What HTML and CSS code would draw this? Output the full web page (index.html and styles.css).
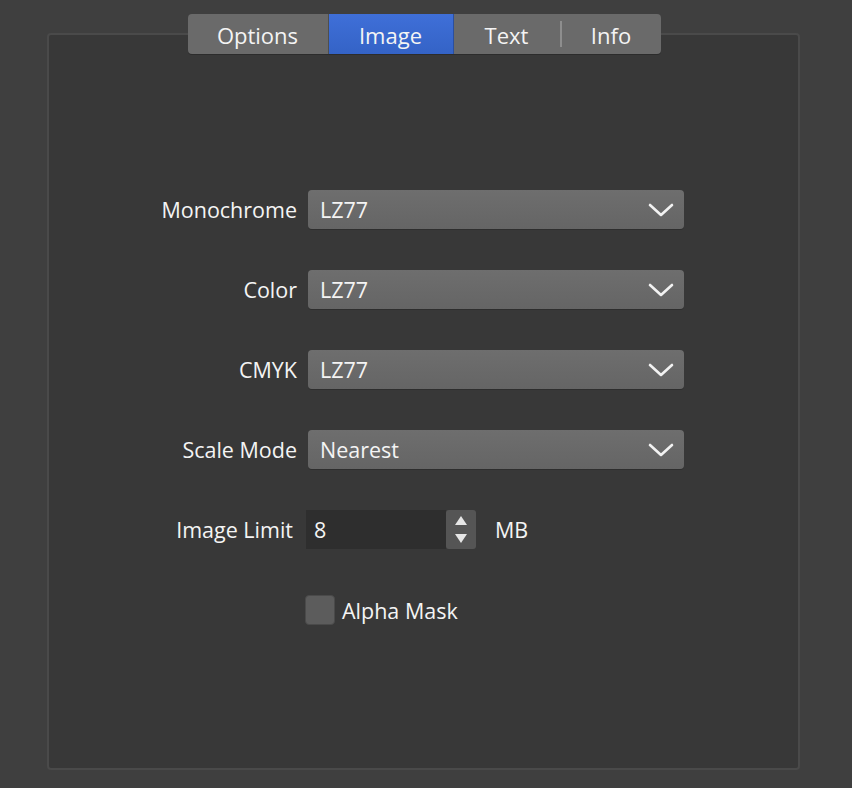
FILE: index.html
```html
<!DOCTYPE html>
<html>
<head>
<meta charset="utf-8">
<link rel="stylesheet" href="styles.css">
</head>
<body>
<div class="page">
  <div class="panel">
    <div class="tabs">
      <div class="tab t-options">Options</div>
      <div class="tab t-image active">Image</div>
      <div class="tab t-text">Text</div>
      <div class="sep"></div>
      <div class="tab t-info">Info</div>
    </div>
    <div class="form">
      <div class="label">Monochrome</div>
      <div class="select"><span>LZ77</span><svg class="chev" width="26" height="14" viewBox="0 0 26 14"><path d="M2 2 L13 12 L24 2" fill="none" stroke="#f2f2f2" stroke-width="2.6" stroke-linecap="round" stroke-linejoin="round"/></svg></div>

      <div class="label">Color</div>
      <div class="select"><span>LZ77</span><svg class="chev" width="26" height="14" viewBox="0 0 26 14"><path d="M2 2 L13 12 L24 2" fill="none" stroke="#f2f2f2" stroke-width="2.6" stroke-linecap="round" stroke-linejoin="round"/></svg></div>

      <div class="label">CMYK</div>
      <div class="select"><span>LZ77</span><svg class="chev" width="26" height="14" viewBox="0 0 26 14"><path d="M2 2 L13 12 L24 2" fill="none" stroke="#f2f2f2" stroke-width="2.6" stroke-linecap="round" stroke-linejoin="round"/></svg></div>

      <div class="label">Scale Mode</div>
      <div class="select"><span>Nearest</span><svg class="chev" width="26" height="14" viewBox="0 0 26 14"><path d="M2 2 L13 12 L24 2" fill="none" stroke="#f2f2f2" stroke-width="2.6" stroke-linecap="round" stroke-linejoin="round"/></svg></div>

      <div class="label label-limit">Image Limit</div>
      <div class="limit">
        <div class="num">8</div>
        <div class="stepper">
          <svg width="12" height="9" viewBox="0 0 12 9"><path d="M6 0 L12 9 L0 9 Z" fill="#e6e6e6"/></svg>
          <svg width="12" height="9" viewBox="0 0 12 9"><path d="M0 0 L12 0 L6 9 Z" fill="#e6e6e6"/></svg>
        </div>
        <div class="unit">MB</div>
      </div>

      <div class="label"></div>
      <div class="check-row">
        <div class="checkbox"></div>
        <div class="check-label">Alpha Mask</div>
      </div>
    </div>
  </div>
</div>
</body>
</html>
```

FILE: styles.css
```css
html, body {
  margin: 0;
  padding: 0;
  background: #3f3f3f;
}
body {
  width: 852px;
  height: 788px;
  overflow: hidden;
  font-family: "Open Sans", Lato, sans-serif;
  color: #f4f4f4;
}
.page {
  padding: 33px 51px 0 47px;
}
.panel {
  box-sizing: border-box;
  width: 753px;
  height: 737px;
  background: #383838;
  border: 2px solid #4a4a4a;
  border-radius: 4px;
  display: flex;
  flex-direction: column;
  align-items: center;
}
.tabs {
  margin-top: -21px;
  height: 40px;
  display: flex;
  align-items: center;
  background: #6a6a6a;
  border-radius: 4px;
  box-shadow: 0 1px 0 #2c2c2c;
  font-size: 22px;
  margin-left: 1px;
}
.tab {
  height: 40px;
  display: flex;
  align-items: center;
  justify-content: center;
  box-sizing: border-box;
  padding-top: 2px;
}
.t-options { width: 141px; border-right: 1px solid #4e4e4e; }
.t-image {
  width: 125px;
  background: linear-gradient(#3f6fd8, #3463c6);
  border-right: 1px solid #2b4f9e;
}
.t-text { width: 106px; }
.sep {
  width: 2px;
  height: 26px;
  background: #8e8e8e;
}
.t-info { width: 99px; }
.form {
  margin-top: 136px;
  align-self: flex-start;
  margin-left: 88px;
  display: grid;
  grid-template-columns: 160px 376px;
  column-gap: 11px;
  row-gap: 41px;
  align-items: center;
  font-size: 21.5px;
}
.label {
  text-align: right;
  white-space: nowrap;
}
.label-limit { padding-right: 4px; }
.select {
  height: 39px;
  box-sizing: border-box;
  background: linear-gradient(#6e6e6e, #656565);
  border-radius: 4px;
  box-shadow: 0 1px 0 #2e2e2e;
  display: flex;
  align-items: center;
  justify-content: space-between;
  padding: 0 10px 0 12px;
}
.chev { display: block; }
.limit {
  display: flex;
  align-items: center;
  height: 39px;
  margin-left: -2px;
}
.num {
  width: 140px;
  height: 39px;
  box-sizing: border-box;
  background: #2e2e2e;
  display: flex;
  align-items: center;
  padding-left: 8px;
}
.stepper {
  width: 30px;
  height: 39px;
  box-sizing: border-box;
  background: #555555;
  border-radius: 3px;
  display: flex;
  flex-direction: column;
  align-items: center;
  justify-content: space-between;
  padding: 6px 0 6px;
}
.stepper svg { display: block; }
.unit {
  margin-left: 19px;
}
.check-row {
  display: flex;
  align-items: center;
  height: 30px;
  margin-left: -3px;
  margin-top: 5px;
}
.checkbox {
  width: 30px;
  height: 30px;
  box-sizing: border-box;
  background: #5c5c5c;
  border: 1px solid #4a4a4a;
  border-radius: 4px;
}
.check-label {
  margin-left: 7px;
}
```
